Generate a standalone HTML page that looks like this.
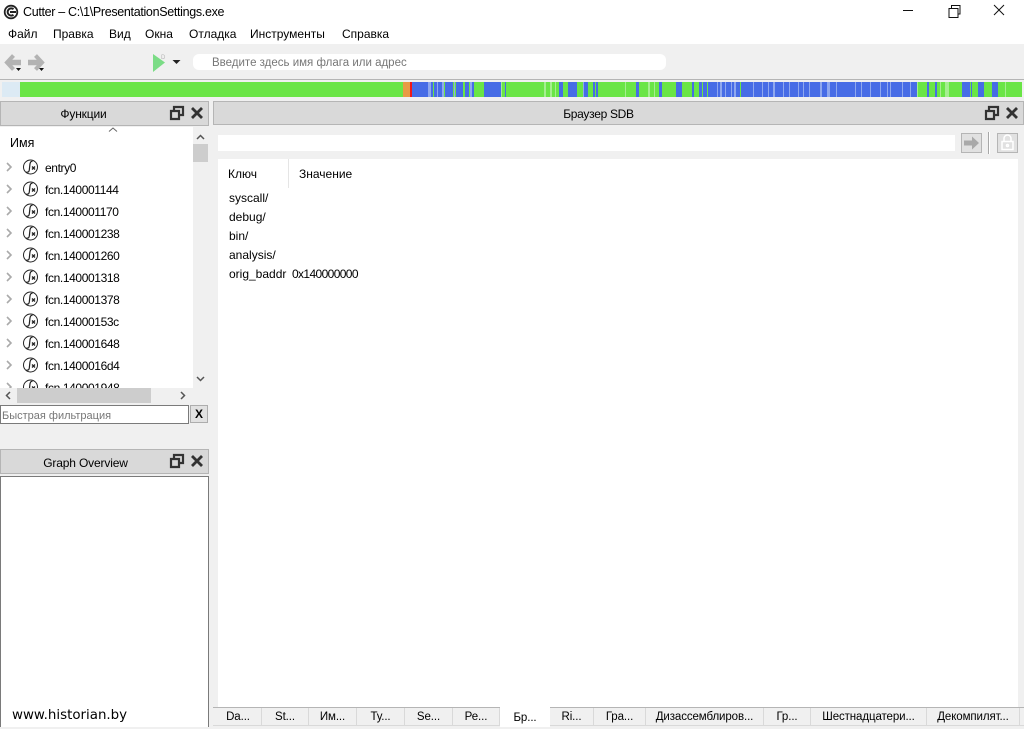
<!DOCTYPE html>
<html><head><meta charset="utf-8"><style>
html,body{margin:0;padding:0;width:1024px;height:727px;overflow:hidden;background:#f0f0f0;font-family:"Liberation Sans",sans-serif;font-size:12px;color:#000}
div,span,svg{position:absolute;box-sizing:border-box;white-space:nowrap}
.t{line-height:16px}
.h{background:#d9d9d9;border:1px solid #b5b5b5;text-align:center;line-height:25px;letter-spacing:-.15px}
.tab{top:708px;height:17px;line-height:19px;text-align:center;border-right:1px solid #d9d9d9;background:#f0f0f0;font-size:11.5px;letter-spacing:-.1px}
.fr{left:45px;letter-spacing:-.38px}
</style></head><body>
<div style="left:0;top:0;width:1024px;height:44px;background:#fff"></div>
<svg style="left:3px;top:4px" width="16" height="16" viewBox="0 0 16 16"><circle cx="8" cy="8" r="6.3" fill="#fff" stroke="#222" stroke-width="1.8"/><path d="M10.5 5.2A3.6 3.6 0 1 0 10.5 10.8" fill="none" stroke="#222" stroke-width="2"/><path d="M7 8h6" stroke="#222" stroke-width="2"/></svg>
<div class="t" style="left:23px;top:4px;font-size:12.5px;letter-spacing:-.32px">Cutter – C:\1\PresentationSettings.exe</div>
<svg style="left:900px;top:0" width="124" height="22" fill="none" stroke="#111"><path d="M3 10.5H13M49 8.500h9v9h-9zM51.500 8V5.500h8.500v8.500h-2.500M94 5l10 10M104 5L94 15"/></svg>
<div class="t" style="left:8px;top:26px">Файл</div>
<div class="t" style="left:53px;top:26px">Правка</div>
<div class="t" style="left:109px;top:26px">Вид</div>
<div class="t" style="left:145px;top:26px">Окна</div>
<div class="t" style="left:189px;top:26px">Отладка</div>
<div class="t" style="left:250px;top:26px">Инструменты</div>
<div class="t" style="left:342px;top:26px">Справка</div>
<div style="left:0;top:79px;width:1024px;height:1px;background:#b5b5b5"></div>
<svg style="left:0;top:48px" width="190" height="30"><g fill="none" stroke="#b3b3b3"><path d="M13.500 7.500L7 14.500l6.500 7" stroke-width="4"/><path d="M8 14.500H21" stroke-width="5.500"/><path d="M35.500 7.500L42 14.500l-6.500 7" stroke-width="4"/><path d="M41 14.500H28" stroke-width="5.500"/></g><path d="M16 20h5l-2.500 3zM39 20h5l-2.500 3z" fill="#111"/><path d="M153 6L165 14.500 153 24z" fill="#7bdc86"/><path d="M172.500 12h8l-4 4z" fill="#222"/><text x="161" y="11" font-size="6" fill="#b5b5b5" font-family="Liberation Sans">D</text></svg>
<div style="left:193px;top:54px;width:473px;height:16px;background:#fff;border-radius:6px"></div>
<div class="t" style="left:212px;top:55px;font-size:11.500px;color:#777">Введите здесь имя флага или адрес</div>
<svg style="left:0;top:82px" width="1024" height="15"><rect x="2" width="18" height="15" fill="#dceaf4"/><rect x="20" width="1002" height="15" fill="#6ae546"/><rect x="403" width="7" height="15" fill="#e89a45"/><rect x="410" width="2" height="15" fill="#f01818"/>
<g fill="#476ce6"><rect x="412" width="16" height="15"/><rect x="431" width="2" height="15"/><rect x="434" width="3" height="15"/><rect x="438" width="4" height="15"/><rect x="445" width="8" height="15"/><rect x="456" width="7" height="15"/><rect x="465" width="4" height="15"/><rect x="472" width="2" height="15"/><rect x="484" width="17" height="15"/><rect x="505" width="1" height="15"/><rect x="559" width="4" height="15"/><rect x="568" width="9" height="15"/><rect x="584" width="4" height="15"/><rect x="593" width="2" height="15"/><rect x="596" width="2" height="15"/><rect x="636" width="3" height="15"/><rect x="659" width="3" height="15"/><rect x="676" width="6" height="15"/><rect x="692" width="2" height="15"/><rect x="699" width="3" height="15"/><rect x="703" width="4" height="15"/><rect x="708" width="32" height="15"/><rect x="741" width="176" height="15"/><rect x="927" width="2" height="15"/><rect x="935" width="2" height="15"/><rect x="962" width="8" height="15"/><rect x="971" width="1" height="15"/><rect x="978" width="6" height="15"/><rect x="992" width="6" height="15"/></g>
<g fill="#8fa8ee"><rect x="428" width="3" height="15"/><rect x="437" width="1" height="15"/><rect x="442" width="2" height="15"/><rect x="454" width="1" height="15"/><rect x="470" width="2" height="15"/><rect x="583" width="1" height="15"/><rect x="717" width="1" height="15"/><rect x="720" width="2" height="15"/><rect x="725" width="1" height="15"/><rect x="731" width="1" height="15"/><rect x="734" width="2" height="15"/><rect x="753" width="1" height="15"/><rect x="762" width="1" height="15"/><rect x="768" width="1" height="15"/><rect x="773" width="2" height="15"/><rect x="783" width="1" height="15"/><rect x="789" width="1" height="15"/><rect x="798" width="1" height="15"/><rect x="803" width="1" height="15"/><rect x="809" width="1" height="15"/><rect x="820" width="2" height="15"/><rect x="827" width="3" height="15"/><rect x="836" width="1" height="15"/><rect x="855" width="1" height="15"/><rect x="861" width="1" height="15"/><rect x="870" width="1" height="15"/><rect x="880" width="1" height="15"/><rect x="887" width="1" height="15"/><rect x="890" width="1" height="15"/><rect x="902" width="1" height="15"/><rect x="910" width="1" height="15"/></g>
<g fill="#a5ee90"><rect x="544" width="2" height="15"/><rect x="550" width="2" height="15"/><rect x="555" width="1" height="15"/><rect x="501" width="1" height="15"/><rect x="625" width="1" height="15"/><rect x="648" width="2" height="15"/><rect x="654" width="1" height="15"/><rect x="917" width="1" height="15"/><rect x="940" width="1" height="15"/><rect x="945" width="4" height="15"/><rect x="1005" width="1" height="15"/></g></svg>
<div class="h" style="left:0;top:101px;width:209px;height:25px;padding-right:42px">Функции</div>
<svg style="left:168px;top:104px" width="38" height="18" fill="none" stroke="#333" stroke-width="2.200"><path d="M3 7h8v8H3zM6 6V3h9v8h-3"/><path d="M24 4l10 10M34 4L24 14" stroke-width="2.800"/></svg>
<div style="left:0;top:127px;width:193px;height:261px;background:#fff;overflow:hidden">
<div class="t" style="left:10px;top:8px;font-size:12.500px">Имя</div>
<svg style="left:108px;top:0" width="10" height="5" fill="none" stroke="#666"><path d="M1 4.500L5 1l4 3.500"/></svg>
<svg style="left:0;top:29px" width="40" height="240" fill="none">
<defs><g id="r"><path d="M7 7l4 4-4 4" stroke="#aaa" stroke-width="1.600"/><circle cx="30.500" cy="11" r="7" stroke="#222"/><path d="M32.500 5.500c-1.800-.5-2.300 1-2.600 3L29.300 14c-.3 1.800-1 2.500-3 2" stroke="#222" stroke-width="1.200"/><path d="M32 10.500l3 3M35 10.500l-3 3" stroke="#222" stroke-width="1.300"/></g></defs>
<use href="#r"/><use href="#r" y="22"/><use href="#r" y="44"/><use href="#r" y="66"/><use href="#r" y="88"/><use href="#r" y="110"/><use href="#r" y="132"/><use href="#r" y="154"/><use href="#r" y="176"/><use href="#r" y="198"/><use href="#r" y="220"/></svg>
<div class="t fr" style="top:33px">entry0</div>
<div class="t fr" style="top:55px">fcn.140001144</div>
<div class="t fr" style="top:77px">fcn.140001170</div>
<div class="t fr" style="top:99px">fcn.140001238</div>
<div class="t fr" style="top:121px">fcn.140001260</div>
<div class="t fr" style="top:143px">fcn.140001318</div>
<div class="t fr" style="top:165px">fcn.140001378</div>
<div class="t fr" style="top:187px">fcn.14000153c</div>
<div class="t fr" style="top:209px">fcn.140001648</div>
<div class="t fr" style="top:231px">fcn.1400016d4</div>
<div class="t fr" style="top:253px">fcn.140001948</div>
</div>
<div style="left:193px;top:144px;width:15px;height:18px;background:#cdcdcd"></div>
<svg style="left:193px;top:127px" width="15" height="276" fill="none" stroke="#555" stroke-width="1.500"><path d="M4 12l3.500-3.500L11 12M4 250l3.500 3.500L11 250"/></svg>
<div style="left:17px;top:388px;width:134px;height:15px;background:#cdcdcd"></div>
<svg style="left:0;top:388px" width="193" height="15" fill="none" stroke="#555" stroke-width="1.500"><path d="M10 4L6.500 7.500 10 11M181 4l3.500 3.500L181 11"/></svg>
<div style="left:0;top:405px;width:189px;height:19px;background:#fff;border:1px solid #7a7a7a"></div>
<div class="t" style="left:2px;top:408px;font-size:11px;color:#777">Быстрая фильтрация</div>
<div style="left:190px;top:405px;width:18px;height:18px;background:#e1e1e1;border:1px solid #adadad;text-align:center;line-height:17px;font-weight:bold">X</div>
<div class="h" style="left:0;top:449px;width:209px;height:25px;padding-right:38px;line-height:27px">Graph Overview</div>
<svg style="left:168px;top:452px" width="38" height="18" fill="none" stroke="#333" stroke-width="2.200"><path d="M3 7h8v8H3zM6 6V3h9v8h-3"/><path d="M24 4l10 10M34 4L24 14" stroke-width="2.800"/></svg>
<div style="left:0;top:476px;width:209px;height:251px;background:#fff;border:1px solid #7a7a7a;border-bottom:0"></div>
<div style="left:12px;top:707px;line-height:18px;font-family:'DejaVu Sans',sans-serif;font-size:13.400px">www.historian.by</div>
<div class="h" style="left:213px;top:101px;width:811px;height:24px;padding-right:40px;letter-spacing:-.3px">Браузер SDB</div>
<svg style="left:983px;top:104px" width="38" height="18" fill="none" stroke="#333" stroke-width="2.200"><path d="M3 7h8v8H3zM6 6V3h9v8h-3"/><path d="M24 4l10 10M34 4L24 14" stroke-width="2.800"/></svg>
<div style="left:218px;top:135px;width:737px;height:16px;background:#fff"></div>
<div style="left:961px;top:133px;width:21px;height:20px;background:#e1e1e1;border:1px solid #b5b5b5"></div>
<svg style="left:961px;top:133px" width="21" height="20"><path d="M3 7.500h8V3.500l7 6.500-7 6.500v-4H3z" fill="#a9a9a9"/></svg>
<div style="left:988px;top:132px;width:1px;height:22px;background:#a8a8a8"></div>
<div style="left:989px;top:132px;width:1px;height:22px;background:#fff"></div>
<div style="left:997px;top:133px;width:21px;height:20px;background:#e1e1e1;border:1px solid #b5b5b5"></div>
<svg style="left:997px;top:133px" width="21" height="20" fill="none" stroke="#fff" stroke-width="1.500"><path d="M7 8V5.500a3.500 3.500 0 0 1 7 0V8"/><rect x="5" y="8.500" width="11" height="8"/><circle cx="10.500" cy="12.500" r="1"/></svg>
<div style="left:218px;top:159px;width:800px;height:548px;background:#fff"></div>
<div style="left:288px;top:159px;width:1px;height:29px;background:#e5e5e5"></div>
<div class="t" style="left:228px;top:166px">Ключ</div>
<div class="t" style="left:299px;top:166px">Значение</div>
<div class="t" style="left:229px;top:190px">syscall/</div>
<div class="t" style="left:229px;top:209px">debug/</div>
<div class="t" style="left:229px;top:228px">bin/</div>
<div class="t" style="left:229px;top:247px">analysis/</div>
<div class="t" style="left:229px;top:266px">orig_baddr</div>
<div class="t" style="left:292px;top:266px;letter-spacing:-.62px">0x140000000</div>
<div style="left:213px;top:707px;width:811px;height:1px;background:#b5b5b5"></div>
<div style="left:213px;top:725px;width:811px;height:1px;background:#d9d9d9"></div>
<div class="tab" style="left:215px;width:47px">Da...</div>
<div class="tab" style="left:262px;width:47px">St...</div>
<div class="tab" style="left:309px;width:48px">Им...</div>
<div class="tab" style="left:357px;width:48px">Ту...</div>
<div class="tab" style="left:405px;width:48px">Se...</div>
<div class="tab" style="left:453px;width:47px">Ре...</div>
<div class="tab" style="left:500px;width:50px;top:707px;height:20px;line-height:22px;background:#fff;border:0">Бр...</div>
<div class="tab" style="left:550px;width:44px">Ri...</div>
<div class="tab" style="left:594px;width:52px">Гра...</div>
<div class="tab" style="left:646px;width:118px">Дизассемблиров...</div>
<div class="tab" style="left:764px;width:47px">Гр...</div>
<div class="tab" style="left:811px;width:116px">Шестнадцатери...</div>
<div class="tab" style="left:927px;width:93px">Декомпилят...</div>
</body></html>
